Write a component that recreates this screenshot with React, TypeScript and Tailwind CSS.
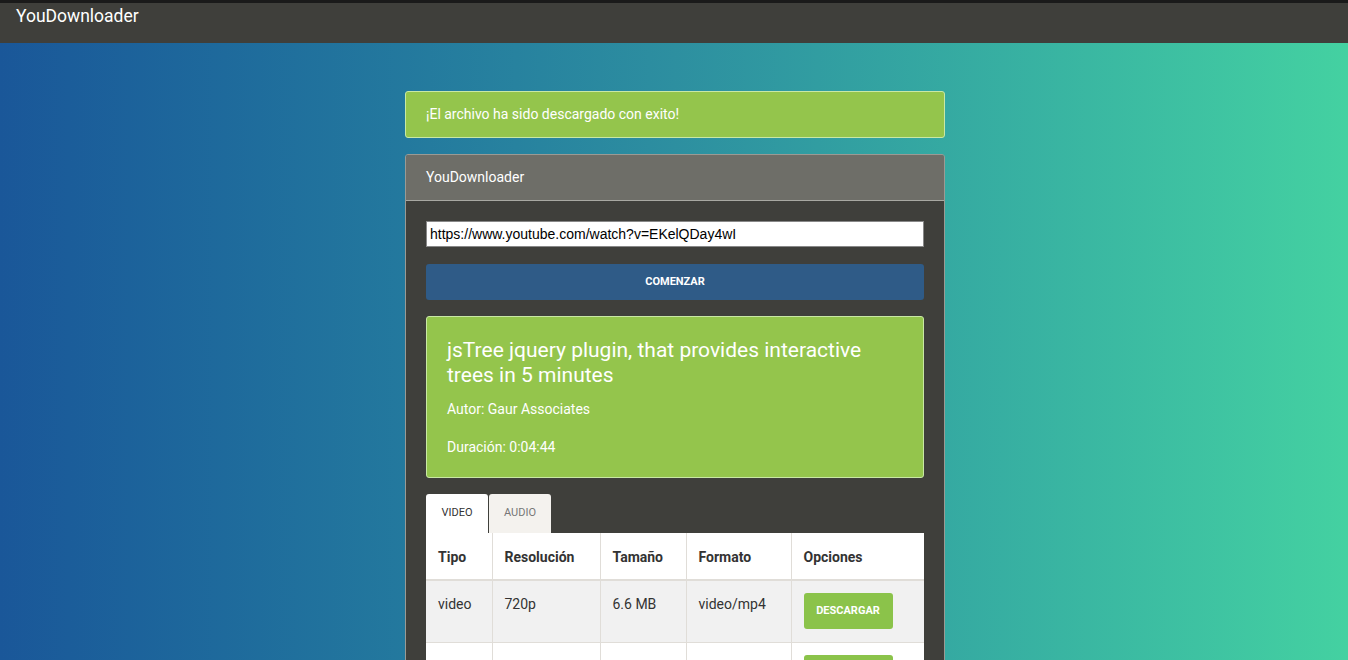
import { useState } from "react";

type Formato = {
  tipo: string
  resolucion: string
  tamano: string
  formato: string
}

const videos: Formato[] = [
  { tipo: "video", resolucion: "720p", tamano: "6.6 MB", formato: "video/mp4" },
  { tipo: "video", resolucion: "360p", tamano: "2.4 MB", formato: "video/mp4" },
]

export default function App() {
  const [url, setUrl] = useState("https://www.youtube.com/watch?v=EKelQDay4wI")
  const [tab, setTab] = useState<"video" | "audio">("video")

  return (
    <div className="min-h-screen flex flex-col font-['Roboto',sans-serif] bg-gradient-to-r from-[#1a5799] via-[#2d8fa0] to-[#44d1a1]">
      <nav className="h-[43px] bg-[#3f3f3b] border-t-[3px] border-[#1a1a1a] px-4 flex items-start">
        <span className="text-white text-[17.5px] leading-[24px] pt-[1px]">YouDownloader</span>
      </nav>

      <div className="pl-[2px]">
        <main className="w-[540px] mx-auto pt-12 flex flex-col gap-4">
          <div className="h-[47px] bg-[#94c54c] border border-[#c9e8a5] rounded-[3px] px-5 flex items-center text-white text-[14px]">
            ¡El archivo ha sido descargado con exito!
          </div>

          <div className="border border-[#9a9a94] rounded-t-[3px] overflow-hidden">
            <div className="h-[46px] bg-[#6e6e68] border-b border-[#a8a8a2] px-5 flex items-center text-white text-[14px]">
              YouDownloader
            </div>
            <div className="bg-[#3f3f3b] px-5 pt-5 pb-10 flex flex-col">
              <input
                value={url}
                onChange={e => setUrl(e.target.value)}
                className="h-[26px] bg-white border border-[#888] px-[3px] text-[14px] text-black font-['Liberation_Sans',sans-serif] outline-none"
              />
              <button className="mt-[17px] h-[36px] bg-[#2f5b87] rounded-[3px] text-white text-[11px] font-bold uppercase">
                Comenzar
              </button>

              <div className="mt-4 h-[162px] bg-[#94c54c] border border-[#c9e8a5] rounded-[3px] px-5 pt-[21px] text-white">
                <h3 className="text-[21px] leading-[25px] pr-10">jsTree jquery plugin, that provides interactive trees in 5 minutes</h3>
                <p className="text-[14px] mt-[11px]">Autor: Gaur Associates</p>
                <p className="text-[14px] mt-[17px]">Duración: 0:04:44</p>
              </div>

              <div className="mt-4 flex">
                <button
                  onClick={() => setTab("video")}
                  className={`w-[62px] h-[39px] rounded-t-[3px] text-[11px] uppercase ${tab === "video" ? "bg-white text-[#333]" : "bg-[#f4f2ee] text-[#777]"}`}
                >
                  Video
                </button>
                <button
                  onClick={() => setTab("audio")}
                  className={`ml-px w-[62px] h-[39px] rounded-t-[3px] text-[11px] uppercase ${tab === "audio" ? "bg-white text-[#333]" : "bg-[#f4f2ee] text-[#777]"}`}
                >
                  Audio
                </button>
              </div>

              <table className="w-full bg-white text-[14px] text-[#333] border-collapse">
                <thead>
                  <tr className="h-[47px] border-b-2 border-[#e0ddd8]">
                    <th className="w-[66px] text-left font-bold px-3 pt-[2px] border-r border-[#e0ddd8]">Tipo</th>
                    <th className="w-[108px] text-left font-bold px-3 pt-[2px] border-r border-[#e0ddd8]">Resolución</th>
                    <th className="w-[86px] text-left font-bold px-3 pt-[2px] border-r border-[#e0ddd8]">Tamaño</th>
                    <th className="w-[105px] text-left font-bold px-3 pt-[2px] border-r border-[#e0ddd8]">Formato</th>
                    <th className="text-left font-bold px-3 pt-[2px]">Opciones</th>
                  </tr>
                </thead>
                <tbody>
                  {videos.map((v, i) => (
                    <tr key={v.resolucion} className={`h-[62px] border-b border-[#e0ddd8] align-top ${i % 2 === 0 ? "bg-[#f1f1f1]" : "bg-white"}`}>
                      <td className="px-3 pt-[13px] border-r border-[#e0ddd8]">{v.tipo}</td>
                      <td className="px-3 pt-[13px] border-r border-[#e0ddd8]">{v.resolucion}</td>
                      <td className="px-3 pt-[13px] border-r border-[#e0ddd8]">{v.tamano}</td>
                      <td className="px-3 pt-[13px] border-r border-[#e0ddd8]">{v.formato}</td>
                      <td className="px-3 pt-3">
                        <button className="w-[89px] h-[36px] bg-[#8bc34a] rounded-[3px] text-white text-[11px] font-bold uppercase">
                          Descargar
                        </button>
                      </td>
                    </tr>
                  ))}
                </tbody>
              </table>
            </div>
          </div>
        </main>
      </div>
    </div>
  )
}
